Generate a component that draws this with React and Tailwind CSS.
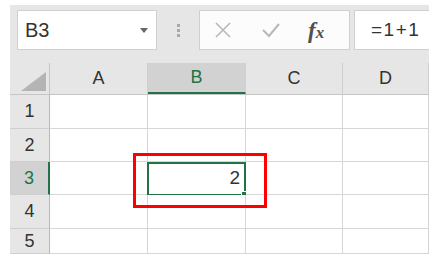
const cols = [
  { name: 'A', w: 'w-[98px]' },
  { name: 'B', w: 'w-[98px]' },
  { name: 'C', w: 'w-[97px]' },
  { name: 'D', w: 'flex-1' },
];

const rows = [
  { n: 1, h: 'h-[34px]' },
  { n: 2, h: 'h-[33px]' },
  { n: 3, h: 'h-[33px]' },
  { n: 4, h: 'h-[34px]' },
  { n: 5, h: 'h-[25px]' },
];

function FormulaButtons() {
  return (
    <div className="w-[151px] h-[40px] bg-[#fcfcfc] border border-[#d0d0d0] flex items-center pl-[14px] gap-[30px]">
      <svg width="18" height="18" viewBox="0 0 18 18" fill="none" stroke="#b8b8b8" strokeWidth="1.6">
        <path d="M2 2L16 16M16 2L2 16" />
      </svg>
      <svg width="18" height="16" viewBox="0 0 18 16" fill="none" stroke="#b8b8b8" strokeWidth="2">
        <path d="M1 8L7 14L17 2" />
      </svg>
      <span className="text-[23px] italic font-bold text-[#505050] leading-none ml-[-2px]" style={{ fontFamily: '"Liberation Serif", serif' }}>
        f<span className="text-[17px]">x</span>
      </span>
    </div>
  );
}

export default function App() {
  return (
    <div className="w-[438px] h-[264px] bg-white pl-[10px] pt-[5px] pr-[9px] pb-[10px]" style={{ fontFamily: '"Liberation Sans", Arial, sans-serif' }}>
      <div className="relative w-full h-full bg-[#e6e6e6] overflow-hidden">
        {/* formula bar */}
        <div className="h-[58px] flex items-start pt-[5px] pl-[7px]">
          <div className="w-[140px] h-[40px] bg-white border border-[#d0d0d0] flex items-center justify-between pl-[7px] pr-[8px]">
            <span className="text-[20px] text-[#333]">B3</span>
            <svg width="8" height="5" viewBox="0 0 8 5"><path d="M0 0H8L4 5Z" fill="#666" /></svg>
          </div>
          <div className="w-[42px] h-[40px] flex flex-col items-center justify-center gap-[2px]">
            <div className="w-[3px] h-[3px] bg-[#a8a8a8]" />
            <div className="w-[3px] h-[3px] bg-[#a8a8a8]" />
            <div className="w-[3px] h-[3px] bg-[#a8a8a8]" />
          </div>
          <FormulaButtons />
          <div className="ml-[4px] flex-1 h-[40px] bg-white border border-[#d0d0d0] border-r-0 flex items-center pl-[16px]">
            <span className="text-[19px] text-[#333] tracking-[1.5px]">=1+1</span>
          </div>
        </div>

        {/* column headers */}
        <div className="h-[32px] flex border-b border-[#c6c6c6]">
          <div className="w-[40px] border-r border-[#c6c6c6] flex items-end justify-end pr-[3px] pb-[3px]">
            <svg width="25" height="19" viewBox="0 0 25 19"><path d="M25 0V19H0Z" fill="#b4b4b4" /></svg>
          </div>
          {cols.map((c) => (
            <div
              key={c.name}
              className={`${c.w} border-r border-[#cfcfcf] flex items-center justify-center text-[18px] ${c.name === 'B' ? 'bg-[#d2d2d2] text-[#217346] border-b-2 border-b-[#217346]' : 'text-[#333]'}`}
            >
              {c.name}
            </div>
          ))}
        </div>

        {/* rows */}
        {rows.map((r) => (
          <div key={r.n} className={`${r.h} flex`}>
            <div className={`w-[40px] flex items-center justify-center text-[18px] border-b border-[#cfcfcf] ${r.n === 3 ? 'bg-[#d2d2d2] text-[#217346] border-r-2 border-r-[#217346]' : 'text-[#333] border-r border-r-[#b8b8b8]'}`}>
              {r.n}
            </div>
            {cols.map((c) => (
              <div key={c.name} className={`${c.w} relative bg-white border-r border-b border-[#d6d6d6] flex items-center justify-end pr-[5px]`}>
                {r.n === 3 && c.name === 'B' && (
                  <>
                    <span className="text-[19px] text-[#333]">2</span>
                    <div className="absolute -left-px top-0 -right-px -bottom-[2px] border-2 border-[#217346]" />
                    <div className="absolute -right-[3px] -bottom-[4px] w-[7px] h-[7px] bg-[#217346] border border-white" />
                  </>
                )}
              </div>
            ))}
          </div>
        ))}

        {/* red highlight */}
        <div className="absolute left-[123px] top-[148px] w-[134px] h-[55px] border-[3px] border-[#ff0000]" />
      </div>
    </div>
  );
}
